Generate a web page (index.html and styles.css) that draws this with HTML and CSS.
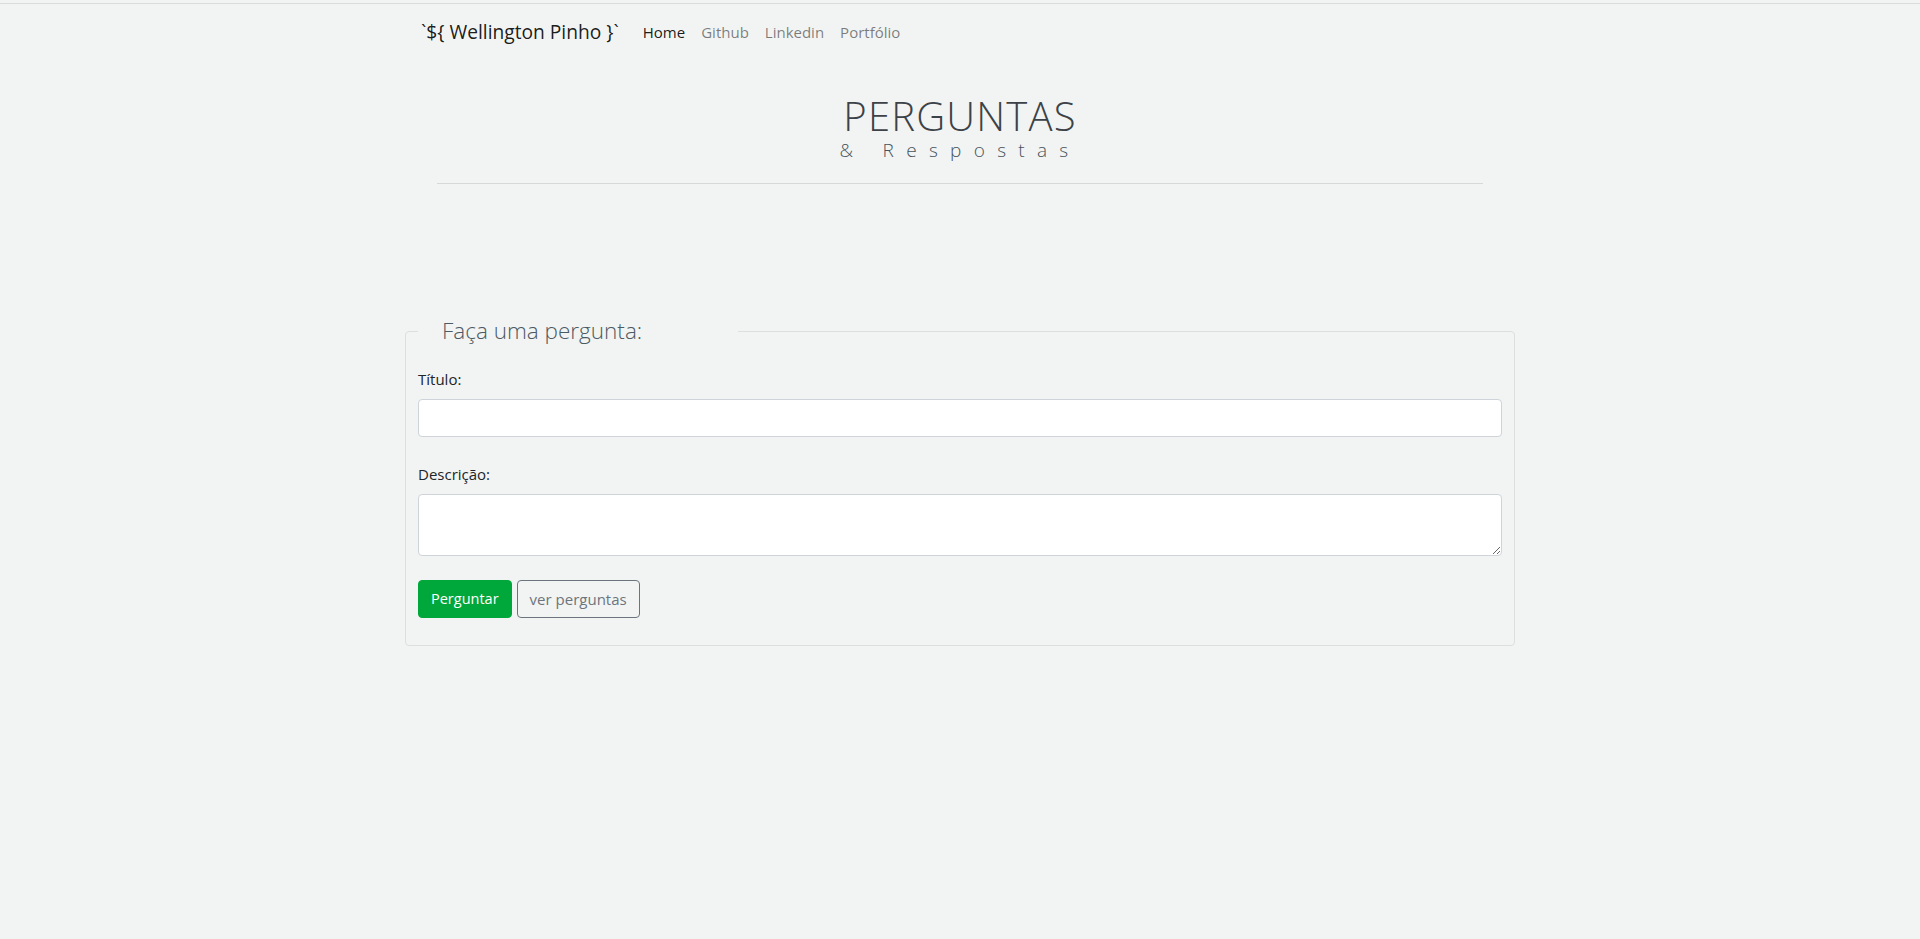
FILE: index.html
```html
<!DOCTYPE html>
<html lang="pt-BR">
<head>
<meta charset="utf-8">
<title>Perguntas &amp; Respostas</title>
<link rel="stylesheet" href="styles.css">
</head>
<body>
<div class="topline"></div>
<div class="container">
  <nav class="navbar">
    <a class="brand" href="#">`${ Wellington Pinho }`</a>
    <ul class="nav">
      <li><a class="nav-link active" href="#">Home</a></li>
      <li><a class="nav-link" href="#">Github</a></li>
      <li><a class="nav-link" href="#">Linkedin</a></li>
      <li><a class="nav-link" href="#">Portfólio</a></li>
    </ul>
  </nav>

  <header class="hero">
    <h1 class="hero-title">PERGUNTAS</h1>
    <p class="hero-sub">&amp; Respostas</p>
    <hr class="hero-rule">
  </header>

  <form class="ask-form">
    <fieldset class="ask-box">
      <legend class="ask-legend">Faça uma pergunta:</legend>
      <div class="form-group first">
        <label class="form-label" for="titulo">Título:</label>
        <input class="form-control" id="titulo" type="text">
      </div>
      <div class="form-group">
        <label class="form-label" for="descricao">Descrição:</label>
        <textarea class="form-control form-textarea" id="descricao" rows="2"></textarea>
      </div>
      <div class="btn-row">
        <button class="btn btn-success" type="button">Perguntar</button>
        <button class="btn btn-outline" type="button">ver perguntas</button>
      </div>
    </fieldset>
  </form>
</div>
</body>
</html>
```
FILE: styles.css
```css
* { box-sizing: border-box; }

html, body {
  margin: 0;
  padding: 0;
}

body {
  background: #f2f4f3;
  font-family: "Open Sans", "Noto Sans", Arial, sans-serif;
  font-size: 15px;
  line-height: 24px;
  color: #212529;
  min-height: 939px;
}

.topline {
  height: 4px;
  border-bottom: 1px solid #dadcdb;
}

.container {
  width: 1140px;
  margin: 0 auto;
  padding: 0 15px;
}

/* navbar */
.navbar {
  display: flex;
  align-items: center;
  padding: 8px 16px;
  height: 56px;
}

.brand {
  font-size: 19.2px;
  line-height: 30px;
  padding: 5px 0;
  margin-right: 16px;
  color: rgba(0, 0, 0, 0.9);
  text-decoration: none;
  white-space: nowrap;
}

.nav {
  display: flex;
  list-style: none;
  margin: 0;
  padding: 0;
}

.nav-link {
  display: block;
  padding: 8px 8px;
  font-size: 15px;
  line-height: 24px;
  color: rgba(0, 0, 0, 0.5);
  text-decoration: none;
}

.nav-link.active {
  color: rgba(0, 0, 0, 0.9);
}

/* header */
.hero {
  text-align: center;
  padding-top: 36px;
}

.hero-title {
  margin: 0;
  font-size: 40px;
  line-height: 40px;
  font-weight: 300;
  letter-spacing: 1.2px;
  color: #3c4247;
}

.hero-sub {
  margin: 4px 0 0;
  font-size: 19px;
  line-height: 20px;
  font-weight: 300;
  letter-spacing: 12.3px;
  color: #46535c;
}

.hero-rule {
  width: 1046px;
  margin: 23px auto 0;
  border: 0;
  border-top: 1px solid #d7d9d8;
  height: 0;
}

/* form */
.ask-form {
  margin-top: 129px;
}

.ask-box {
  margin: 0;
  padding: 0 12px 27px;
  border: 1px solid #dcdfdd;
  border-radius: 4px;
  min-width: 0;
}

.ask-legend {
  width: 320px;
  padding: 0 24px;
  margin: 0;
  font-size: 22.5px;
  line-height: 36px;
  font-weight: 300;
  color: #4c5a63;
}

.form-group {
  margin-bottom: 24px;
}

.form-group.first {
  margin-top: 18px;
  margin-bottom: 25px;
}

.form-label {
  display: block;
  margin-bottom: 8px;
  font-size: 15px;
  line-height: 24px;
  color: #212529;
}

.form-control {
  display: block;
  width: 100%;
  height: 38px;
  padding: 6px 12px;
  font-family: inherit;
  font-size: 15px;
  line-height: 24px;
  color: #495057;
  background: #fff;
  border: 1px solid #ced4da;
  border-radius: 4px;
  margin: 0;
}

.form-textarea {
  height: 62px;
  resize: vertical;
}

.btn-row {
  display: flex;
  gap: 5px;
}

.btn {
  display: inline-block;
  padding: 6px 12px;
  font-family: inherit;
  font-size: 14.5px;
  line-height: 24px;
  border: 1px solid transparent;
  border-radius: 4px;
  background: transparent;
  cursor: pointer;
}

.btn-success {
  background: #00a83b;
  border-color: #00a83b;
  color: #fff;
}

.btn-outline {
  font-size: 15px;
  border-color: #6c757d;
  color: #6c757d;
}
```
